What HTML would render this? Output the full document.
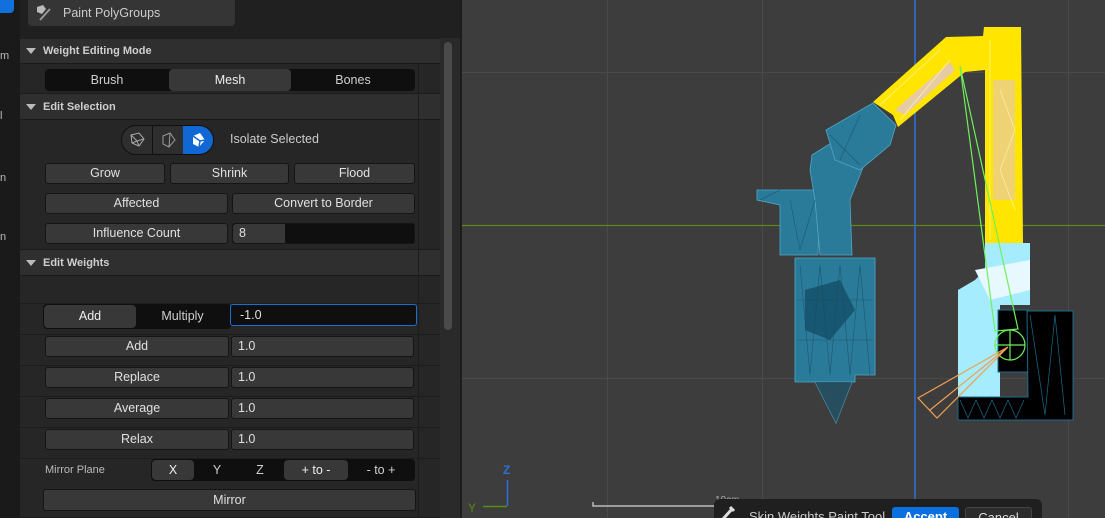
<!DOCTYPE html>
<html style="overflow:hidden;width:1105px;height:518px"><head><meta charset="utf-8"><style>
*{box-sizing:border-box;margin:0;padding:0}
body{width:1105px;height:518px;overflow:hidden;background:#1c1c1c;font-family:"Liberation Sans",sans-serif;font-size:13px;color:#dcdcdc;position:relative}
.a{position:absolute}
.btn{position:absolute;background:#383838;border:1px solid #151515;border-radius:3px;text-align:center;color:#e0e0e0;line-height:19px;font-size:12.5px}
.hdr{position:absolute;left:20px;width:420px;background:#2f2f2f;font-weight:bold;font-size:11px;color:#cfcfcf;padding-left:23px;border-bottom:1px solid #1a1a1a}
.hdr:before{content:"";position:absolute;left:6px;top:50%;margin-top:-3px;border-left:5px solid transparent;border-right:5px solid transparent;border-top:6px solid #bbb}
.row{position:absolute;left:20px;width:420px;background:#262626;border-bottom:1px solid #1c1c1c}
.fld{position:absolute;background:#383838;border:1px solid #151515;border-radius:3px;color:#e0e0e0;line-height:19px;padding-left:6px;font-size:12.5px}
.seg{position:absolute;background:#0f0f0f;border-radius:4px}
.sg{position:absolute;text-align:center;color:#cfcfcf;font-size:12.5px}
.sel{background:#383838;border-radius:4px;color:#eee}
</style></head><body>
<div class="a" style="left:0;top:0;width:20px;height:518px;background:#1a1a1a"></div>
<div class="a" style="left:0;top:0;width:14px;height:13px;background:#1170dc;border-radius:0 0 4px 0"></div>
<div class="a" style="left:0;top:50px;font-size:11px;color:#bbb">m</div>
<div class="a" style="left:0;top:110px;font-size:11px;color:#bbb">l</div>
<div class="a" style="left:0;top:172px;font-size:11px;color:#bbb">n</div>
<div class="a" style="left:0;top:231px;font-size:11px;color:#bbb">n</div>
<div class="a" style="left:20px;top:0;width:440px;height:518px;background:#202020"></div>
<div class="a" style="left:28px;top:0;width:207px;height:26px;background:#353535;border-radius:0 0 4px 4px;color:#ccc;line-height:26px;padding-left:35px;font-size:12.5px">Paint PolyGroups</div>
<svg class="a" style="left:34px;top:3px" width="20" height="20" viewBox="0 0 20 20"><path d="M3 4l6-2 3 4-4 5-5-2z" fill="#bbb"/><path d="M6 17l10-11" stroke="#999" stroke-width="2"/></svg>
<div class="a" style="left:440px;top:38px;width:20px;height:480px;background:#2a2a2a"></div>
<div class="a" style="left:444px;top:42px;width:8px;height:288px;background:#4a4a4a;border-radius:4px"></div>

<div class="hdr" style="top:39px;height:25px;line-height:25px">Weight Editing Mode</div>
<div class="row" style="top:64px;height:30px"></div>
<div class="seg" style="left:45px;top:69px;width:370px;height:22px"></div>
<div class="sg" style="left:45px;top:69px;width:124px;line-height:22px">Brush</div>
<div class="sg sel" style="left:169px;top:69px;width:122px;line-height:22px">Mesh</div>
<div class="sg" style="left:291px;top:69px;width:124px;line-height:22px">Bones</div>

<div class="hdr" style="top:94px;height:26px;line-height:26px">Edit Selection</div>
<div class="row" style="top:120px;height:130px"></div>
<div class="a" style="left:121px;top:125px;width:93px;height:30px;background:#2e2e2e;border:1px solid #111;border-radius:15px;overflow:hidden">
<div class="a" style="left:30px;top:0;width:1px;height:30px;background:#111"></div>
<div class="a" style="left:61px;top:0;width:32px;height:30px;background:#1167d3"></div>
</div>
<svg class="a" style="left:128px;top:131px" width="18" height="18" viewBox="0 0 18 18" fill="none" stroke="#aaa"><path d="M3 4l8-2 5 6-5 7-7-3z M3 4l6 6 7-2 M9 10l-5 2 M9 10l2 5"/></svg>
<svg class="a" style="left:160px;top:131px" width="18" height="18" viewBox="0 0 18 18" fill="none" stroke="#999"><path d="M3 5l7-3 5 7-6 7-6-3z M10 2l-1 14"/></svg>
<svg class="a" style="left:190px;top:131px" width="18" height="18" viewBox="0 0 18 18"><path d="M3 5l7-3 5 7-6 7-6-3z" fill="#fff"/><path d="M3 5l7 5 5-1 M10 10l-1 6" stroke="#1167d3" stroke-width="1.5" fill="none"/></svg>
<div class="a" style="left:230px;top:132px;color:#ccc;font-size:12.5px">Isolate Selected</div>
<div class="btn" style="left:45px;top:163px;width:120px;height:21px">Grow</div>
<div class="btn" style="left:170px;top:163px;width:119px;height:21px">Shrink</div>
<div class="btn" style="left:294px;top:163px;width:121px;height:21px">Flood</div>
<div class="btn" style="left:45px;top:193px;width:183px;height:21px">Affected</div>
<div class="btn" style="left:232px;top:193px;width:183px;height:21px">Convert to Border</div>
<div class="btn" style="left:45px;top:223px;width:183px;height:21px">Influence Count</div>
<div class="fld" style="left:232px;top:223px;width:183px;height:21px;background:#0f0f0f"></div>
<div class="fld" style="left:233px;top:224px;width:52px;height:19px;border:none;border-radius:3px 0 0 3px;line-height:19px">8</div>

<div class="hdr" style="top:250px;height:26px;line-height:26px">Edit Weights</div>
<div class="row" style="top:276px;height:28px"></div>
<div class="row" style="top:304px;height:31px"></div>
<div class="seg" style="left:43px;top:304px;width:188px;height:25px"></div>
<div class="sg sel" style="left:44px;top:305px;width:92px;line-height:23px">Add</div>
<div class="sg" style="left:136px;top:305px;width:93px;line-height:23px">Multiply</div>
<div class="fld" style="left:230px;top:304px;width:187px;height:22px;background:#0f0f0f;border:1px solid #1a6fd0;line-height:20px;padding-left:9px">-1.0</div>
<div class="row" style="top:335px;height:31px"></div>
<div class="row" style="top:366px;height:31px"></div>
<div class="row" style="top:397px;height:31px"></div>
<div class="row" style="top:428px;height:31px"></div>
<div class="row" style="top:459px;height:59px"></div>
<div class="btn" style="left:45px;top:336px;width:184px;height:21px">Add</div>
<div class="fld" style="left:231px;top:336px;width:183px;height:21px">1.0</div>
<div class="btn" style="left:45px;top:367px;width:184px;height:21px">Replace</div>
<div class="fld" style="left:231px;top:367px;width:183px;height:21px">1.0</div>
<div class="btn" style="left:45px;top:398px;width:184px;height:21px">Average</div>
<div class="fld" style="left:231px;top:398px;width:183px;height:21px">1.0</div>
<div class="btn" style="left:45px;top:429px;width:184px;height:21px">Relax</div>
<div class="fld" style="left:231px;top:429px;width:183px;height:21px">1.0</div>
<div class="a" style="left:45px;top:464px;font-size:11px;color:#bbb">Mirror Plane</div>
<div class="seg" style="left:151px;top:459px;width:264px;height:22px"></div>
<div class="sg sel" style="left:152px;top:460px;width:42px;line-height:20px">X</div>
<div class="sg" style="left:196px;top:460px;width:42px;line-height:20px">Y</div>
<div class="sg" style="left:238px;top:460px;width:44px;line-height:20px">Z</div>
<div class="sg sel" style="left:284px;top:460px;width:64px;line-height:20px">+ to -</div>
<div class="sg" style="left:348px;top:460px;width:66px;line-height:20px">- to +</div>
<div class="btn" style="left:43px;top:489px;width:373px;height:22px;line-height:20px">Mirror</div>
<div class="a" style="left:418px;top:64px;width:1px;height:454px;background:#1c1c1c"></div>

<svg class="a" style="left:462px;top:0" width="643" height="518" viewBox="462 0 643 518">
<rect x="462" y="0" width="643" height="518" fill="#3d3d3d"/>
<g stroke="#4a4a4a" stroke-width="1">
<line x1="607.5" y1="0" x2="607.5" y2="518"/><line x1="762.5" y1="0" x2="762.5" y2="518"/><line x1="1068.5" y1="0" x2="1068.5" y2="518"/>
<line x1="462" y1="72.5" x2="1105" y2="72.5"/><line x1="462" y1="378.5" x2="1105" y2="378.5"/>
</g>
<line x1="462" y1="225.5" x2="1105" y2="225.5" stroke="#5d8a12" stroke-width="1.2"/>
<line x1="915" y1="0" x2="915" y2="518" stroke="#2f6fd6" stroke-width="1.5"/>
<g fill="#2a7a9a" stroke="#4fa8c8" stroke-width="0.8">
<polygon points="757,190 820,190 818,255 780,255 780,205 757,200"/>
<polygon points="812,155 852,130 870,150 850,200 852,255 820,255 815,200 810,170"/>
<polygon points="826,130 873,103 896,125 890,145 860,170 835,160"/>
<polygon points="795,258 875,258 875,375 855,375 855,382 795,382"/>
<polygon points="815,382 852,382 836,423"/>
</g>
<g stroke="#1d5870" stroke-width="0.6" fill="none"><path d="M760,200l20,-10 M790,200l10,50l15,-50 M800,265l10,110l10,-110l10,110l10,-110l10,110l10,-110l10,110 M797,300h76 M797,340h76 M830,135l30,30 M860,115l-20,45"/></g>
<polygon points="815,382 852,382 836,423" fill="#222" opacity="0.5"/>
<polygon points="805,290 840,280 855,310 830,340 805,330" fill="#114860" opacity="0.7"/>
<polygon points="873,102 946,37 983,36 984,27 1021,27 1023,243 985,243 985,70 965,72 898,127 893,115" fill="#ffe500"/>
<polygon points="895,110 950,62 955,70 905,115" fill="#e7cba5"/>
<polygon points="993,80 1015,80 1015,200 993,200" fill="#e7cba5" opacity="0.7"/>
<g stroke="#fff6b0" stroke-width="0.6" fill="none"><path d="M880,105l60,-55 M990,40v200 M1000,90l15,40l-15,40l15,40 M900,120l50,-60"/></g>
<polygon points="985,243 1030,243 1030,305 1000,305 1000,415 958,415 958,290 975,280 985,270" fill="#a6ecff"/>
<polygon points="975,270 1030,260 1030,290 990,300" fill="#e8f8ff"/>
<rect x="998" y="310" width="30" height="62" fill="#000" stroke="#1b6d8a"/>
<polygon points="1027,311 1073,311 1073,420 958,420 958,397 1028,397" fill="#000" stroke="#1b6d8a"/>
<g stroke="#1b6d8a" stroke-width="0.7" fill="none"><path d="M1030,315l15,100l10-100l10,100 M960,400l8,18l8-18l8,18l8-18l8,18l8-18l8,18l8-18"/></g>
<g stroke="#6ef05a" stroke-width="1.2" fill="none"><path d="M960,66 L995,331 L1018,329 Z"/><circle cx="1010" cy="345" r="15"/><path d="M1010,330v30M995,345h30"/></g>
<path d="M1008,347 L918,398 L937,418 Z M1008,347 L930,410" stroke="#f0a050" stroke-width="1.2" fill="none"/>
<text x="503" y="474" fill="#2f6fd6" font-size="12" font-family="Liberation Sans" font-weight="bold">Z</text>
<line x1="507.5" y1="480" x2="507.5" y2="506" stroke="#2f6fd6" stroke-width="1.5"/>
<line x1="483" y1="506.5" x2="507" y2="506.5" stroke="#5d8a12" stroke-width="1.5"/>
<text x="468" y="512" fill="#5d8a12" font-size="12" font-family="Liberation Sans">Y</text>
<path d="M593,502v4h143v-4" stroke="#bbb" stroke-width="1.5" fill="none"/>
<text x="715" y="503" fill="#aaa" font-size="10" font-family="Liberation Sans">10cm</text>
</svg>
<div class="a" style="left:714px;top:499px;width:328px;height:19px;background:#1f1f1f;border-radius:6px 6px 0 0;overflow:hidden">
<svg class="a" style="left:6px;top:6px" width="18" height="14" viewBox="0 0 18 14"><path d="M3 14l9-10 M10 2l4 4" stroke="#ddd" stroke-width="3" fill="none"/></svg>
<div class="a" style="left:35px;top:10px;color:#ccc;font-size:13px;white-space:nowrap">Skin Weights Paint Tool</div>
<div class="a" style="left:178px;top:8px;width:67px;height:20px;background:#0a70e0;border-radius:3px;color:#fff;font-weight:bold;text-align:center;line-height:20px">Accept</div>
<div class="a" style="left:251px;top:8px;width:67px;height:20px;background:#2c2c2c;border:1px solid #444;border-radius:3px;color:#ddd;text-align:center;line-height:20px">Cancel</div>
</div>
</body></html>
